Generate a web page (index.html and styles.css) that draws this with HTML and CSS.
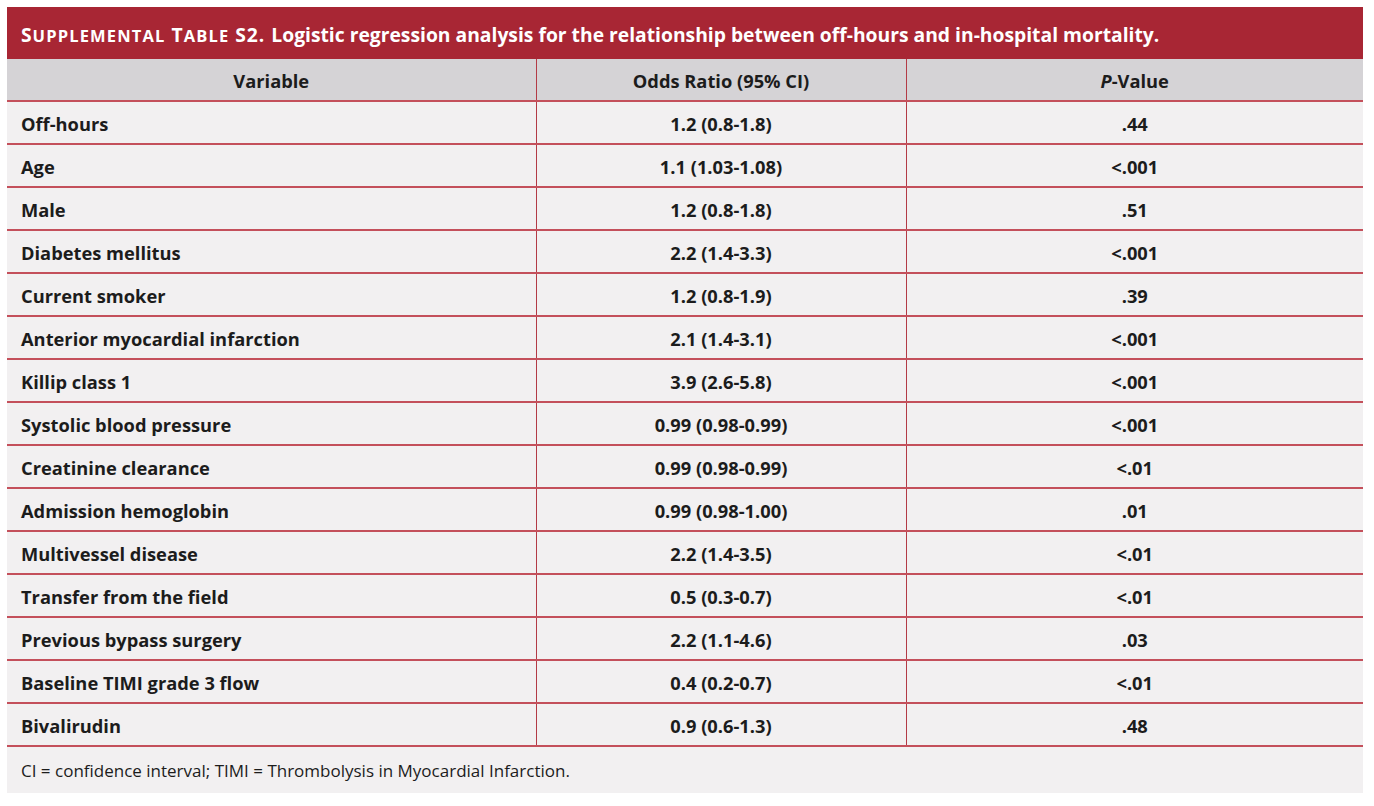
FILE: index.html
```html
<!DOCTYPE html>
<html>
<head>
<meta charset="utf-8">
<link rel="stylesheet" href="styles.css">
</head>
<body>
<div class="panel">
  <div class="title"><span class="lead">S<span class="sm">UPPLEMENTAL</span> T<span class="sm">ABLE</span> S2.</span> Logistic regression analysis for the relationship between off-hours and in-hospital mortality.</div>
  <table class="data">
    <colgroup><col class="c1"><col class="c2"><col class="c3"></colgroup>
    <thead>
      <tr><th>Variable</th><th>Odds Ratio (95% CI)</th><th><i>P</i>-Value</th></tr>
    </thead>
    <tbody>
      <tr><td>Off-hours</td><td>1.2 (0.8-1.8)</td><td>.44</td></tr>
      <tr><td>Age</td><td>1.1 (1.03-1.08)</td><td>&lt;.001</td></tr>
      <tr><td>Male</td><td>1.2 (0.8-1.8)</td><td>.51</td></tr>
      <tr><td>Diabetes mellitus</td><td>2.2 (1.4-3.3)</td><td>&lt;.001</td></tr>
      <tr><td>Current smoker</td><td>1.2 (0.8-1.9)</td><td>.39</td></tr>
      <tr><td>Anterior myocardial infarction</td><td>2.1 (1.4-3.1)</td><td>&lt;.001</td></tr>
      <tr><td>Killip class 1</td><td>3.9 (2.6-5.8)</td><td>&lt;.001</td></tr>
      <tr><td>Systolic blood pressure</td><td>0.99 (0.98-0.99)</td><td>&lt;.001</td></tr>
      <tr><td>Creatinine clearance</td><td>0.99 (0.98-0.99)</td><td>&lt;.01</td></tr>
      <tr><td>Admission hemoglobin</td><td>0.99 (0.98-1.00)</td><td>.01</td></tr>
      <tr><td>Multivessel disease</td><td>2.2 (1.4-3.5)</td><td>&lt;.01</td></tr>
      <tr><td>Transfer from the field</td><td>0.5 (0.3-0.7)</td><td>&lt;.01</td></tr>
      <tr><td>Previous bypass surgery</td><td>2.2 (1.1-4.6)</td><td>.03</td></tr>
      <tr><td>Baseline TIMI grade 3 flow</td><td>0.4 (0.2-0.7)</td><td>&lt;.01</td></tr>
      <tr><td>Bivalirudin</td><td>0.9 (0.6-1.3)</td><td>.48</td></tr>
    </tbody>
  </table>
  <div class="foot">CI = confidence interval; TIMI = Thrombolysis in Myocardial Infarction.</div>
</div>
</body>
</html>
```

FILE: styles.css
```css
html, body {
  margin: 0;
  padding: 0;
  background: #ffffff;
}
body {
  padding: 7px 0 0 7px;
  font-family: "Open Sans", Lato, sans-serif;
  color: #1c1c1c;
}
.panel {
  width: 1356px;
  background: #f2f0f1;
}
.title {
  height: 52px;
  box-sizing: border-box;
  background: #a82634;
  color: #ffffff;
  font-weight: 700;
  font-size: 19.3px;
  padding: 2px 14px 0;
  display: flex;
  align-items: center;
  white-space: nowrap;
}
.title .lead {
  margin-right: 6px;
  letter-spacing: 0.05em;
}
.title .sm {
  font-size: 16.5px;
  letter-spacing: 0.07em;
}
.data {
  width: 100%;
  border-collapse: collapse;
  table-layout: fixed;
}
.c1 { width: 529px; }
.c2 { width: 370px; }
.c3 { width: auto; }
.data th {
  background: #d5d3d6;
  height: 40px;
  font-weight: 700;
  font-size: 18.3px;
  text-align: center;
  padding: 1px 0 0;
  border-bottom: 2px solid #c4505b;
  border-left: 1px solid #b33a46;
}
.data td {
  height: 39px;
  padding: 2px 0 0;
  font-weight: 700;
  font-size: 18.3px;
  text-align: center;
  border-bottom: 2px solid #c4505b;
  border-left: 1px solid #b33a46;
}
.data th:first-child, .data td:first-child {
  border-left: none;
}
.data td:first-child {
  text-align: left;
  padding-left: 14px;
}
.foot {
  height: 46px;
  display: flex;
  align-items: center;
  padding-left: 14px;
  font-size: 17px;
  color: #1c1c1c;
}
```
